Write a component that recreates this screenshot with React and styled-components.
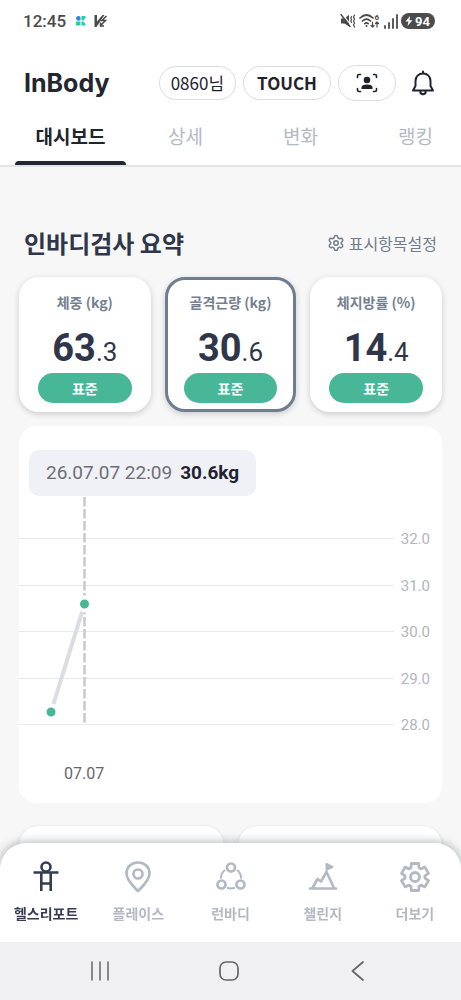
import React from "react";
import styled, { createGlobalStyle } from "styled-components";
import { Settings } from "lucide-react";

const GlobalStyle = createGlobalStyle`
  *, *::before, *::after { box-sizing: border-box; }
  body {
    margin: 0;
    background: #f7f7f7;
    font-family: Roboto, "Noto Sans CJK KR", sans-serif;
    color: #1f2430;
  }
  button { font: inherit; color: inherit; background: none; border: 0; padding: 0; cursor: pointer; }
  h1, h2, p { margin: 0; }
  svg { display: block; flex: none; }
`;

const korean = `"Noto Sans CJK KR", "Noto Sans", sans-serif`;

const Shell = styled.div`
  display: flex;
  flex-direction: column;
  height: 100vh;
  overflow: hidden;
`;

const StatusBar = styled.div`
  display: flex;
  align-items: center;
  justify-content: space-between;
  flex: none;
  height: 42px;
  padding: 0 26px 0 23px;
  background: #fff;
  color: #4a4a4a;
`;

const StatusGroup = styled.div`
  display: flex;
  align-items: center;
  gap: ${(p) => p.$gap}px;
`;

const Clock = styled.span`
  font-size: 17px;
  font-weight: 500;
  line-height: 20px;
  margin-right: 2px;
`;

const Battery = styled.span`
  display: flex;
  align-items: center;
  gap: 2px;
  height: 16px;
  padding: 0 5px 0 4px;
  border-radius: 8px;
  background: #4c4c4c;
  color: #fff;
  font-size: 13px;
  font-weight: 700;
`;

const Header = styled.header`
  display: flex;
  align-items: center;
  justify-content: space-between;
  flex: none;
  height: 80px;
  padding: 2px 26px 0 24px;
  background: #fff;
`;

const Logo = styled.h1`
  font-family: Inter, sans-serif;
  font-size: 25px;
  font-weight: 700;
  line-height: 32px;
  color: #23262f;
`;

const Actions = styled.div`
  display: flex;
  align-items: center;
  gap: 7px;
`;

const Pill = styled.button`
  display: flex;
  align-items: center;
  justify-content: center;
  height: ${(p) => (p.$icon ? 36 : 34)}px;
  padding: 0 ${(p) => p.$pad}px;
  border: 1px solid #dcdde2;
  border-radius: 18px;
  background: #fff;
  font-family: ${korean};
  font-size: 17px;
  font-weight: ${(p) => (p.$bold ? 700 : 400)};
  line-height: 24px;
  color: #1f222a;
`;

const BellButton = styled.button`
  margin-left: 8px;
`;

const Tabs = styled.nav`
  display: flex;
  flex: none;
  height: 45px;
  padding-left: 13px;
  background: #fff;
  border-bottom: 2px solid #e4e4e5;
`;

const Tab = styled.button`
  flex: 0 0 calc(25% + 3px);
  display: flex;
  flex-direction: column;
  align-items: center;
  justify-content: space-between;
  font-family: ${korean};
  font-size: 19px;
  line-height: 28px;
  font-weight: ${(p) => (p.$active ? 700 : 400)};
  color: ${(p) => (p.$active ? "#20242e" : "#b3bac3")};
  &::after {
    content: "";
    width: 111px;
    height: 4px;
    border-radius: 4px 4px 0 0;
    background: ${(p) => (p.$active ? "#202833" : "transparent")};
  }
`;

const Content = styled.main`
  flex: 1;
  min-height: 0;
  padding: 58px 19px 40px;
  overflow-y: auto;
  scrollbar-width: none;
  background: #f7f7f7;
`;

const SectionHead = styled.div`
  display: flex;
  align-items: center;
  justify-content: space-between;
  padding: 0 5px;
  margin-bottom: 16px;
`;

const SectionTitle = styled.h2`
  font-family: ${korean};
  font-size: 24px;
  font-weight: 700;
  line-height: 36px;
  color: #2f364a;
`;

const SettingsButton = styled.button`
  display: flex;
  align-items: center;
  gap: 4px;
  font-family: ${korean};
  font-size: 16px;
  line-height: 24px;
  color: #717d8c;
`;

const CardGrid = styled.div`
  display: grid;
  grid-template-columns: repeat(${(p) => p.$columns}, 1fr);
  gap: 14px;
`;

const MetricCard = styled.button`
  display: flex;
  flex-direction: column;
  align-items: stretch;
  height: 135px;
  padding: 12px 16px 6px;
  border: 3px solid ${(p) => (p.$selected ? "#6f7d91" : "#fff")};
  border-radius: 20px;
  background: #fff;
  box-shadow: 0 2px 6px rgba(0, 0, 0, 0.18);
  text-align: center;
`;

const MetricLabel = styled.span`
  font-family: ${korean};
  font-size: 14px;
  font-weight: 700;
  line-height: 20px;
  color: #748090;
  white-space: nowrap;
  margin: 0 -12px;
`;

const MetricValue = styled.span`
  margin-top: 16px;
  font-size: 26px;
  line-height: 40px;
  color: #2f364a;
  strong { font-size: 38px; font-weight: 700; }
`;

const Badge = styled.span`
  margin-top: 1px;
  border-radius: 15px;
  background: #48b797;
  color: #fff;
  font-family: ${korean};
  font-size: 14px;
  font-weight: 700;
  line-height: 30px;
`;

const ChartCard = styled.section`
  margin: 14px 0 23px;
  padding: 24px 0 17px;
  border-radius: 18px;
  background: #fff;
`;

const Reading = styled.p`
  width: fit-content;
  margin-left: 10px;
  padding: 0 17px;
  border-radius: 10px;
  background: #f0f1f6;
  font-size: 19px;
  line-height: 46px;
  color: #6e6f74;
  white-space: nowrap;
  strong { margin-left: 8px; font-weight: 700; color: #1f2430; }
`;

const Plot = styled.div`
  display: flex;
  gap: 7px;
  padding-right: 12px;
  svg { flex: 1; min-width: 0; height: 239px; }
`;

const Scale = styled.div`
  display: flex;
  flex-direction: column;
  justify-content: space-between;
  padding-top: 33px;
  font-size: 15px;
  line-height: 20px;
  color: #b0b5be;
`;

const DateLabel = styled.p`
  padding-left: 45px;
  margin-top: 27px;
  font-size: 16px;
  line-height: 24px;
  color: #66676b;
`;

const EmptyCard = styled.div`
  height: 135px;
  border-radius: 20px;
  background: #fff;
  box-shadow: 0 1px 4px rgba(0, 0, 0, 0.12);
`;

const BottomNav = styled.nav`
  display: flex;
  flex: none;
  height: 99px;
  margin-top: -28px;
  z-index: 1;
  border-radius: 26px 26px 0 0;
  background: #fff;
  box-shadow: 0 -1px 10px rgba(30, 50, 50, 0.35);
`;

const NavItem = styled.button`
  flex: 1;
  display: flex;
  flex-direction: column;
  align-items: center;
  gap: 9px;
  padding-top: 17px;
  font-family: ${korean};
  font-size: 14px;
  font-weight: 700;
  line-height: 20px;
  color: ${(p) => (p.$active ? "#343d54" : "#b2b9c2")};
`;

const SystemBar = styled.div`
  display: flex;
  flex: none;
  height: 58px;
  padding: 0 38px 0 35px;
  z-index: 1;
  background: #f0f0f2;
`;

const SystemButton = styled.button`
  flex: 1;
  display: flex;
  align-items: center;
  justify-content: center;
`;

const iconProps = {
  fill: "none",
  stroke: "currentColor",
  strokeLinecap: "round",
  strokeLinejoin: "round",
  "aria-hidden": true,
};

const AppBadgeIcon = () => (
  <svg width="10" height="10" viewBox="0 0 10 10" aria-hidden="true">
    <circle cx="2.4" cy="2.4" r="2.3" fill="#2f80e8" />
    <path d="M5.5 0H9.5V1.5L7.5 4.5H5.5ZM0 5.5H4.5V9.5H0ZM5.5 5.5H7.5L9.5 8V9.5H5.5Z" fill="#25cfa4" />
  </svg>
);

const SlashIcon = () => (
  <svg width="14" height="14" viewBox="0 0 14 14" aria-hidden="true">
    <path d="M0.500 1H3V7.500L8.500 1H10.500L2.500 13H0.500Z" fill="currentColor" />
    <path d="M12.500 2L8 6.500H11.500L6.500 11.500M6.500 8.500V12H10" fill="none" stroke="currentColor" strokeWidth="1.500" />
  </svg>
);

const MutedIcon = () => (
  <svg width="16" height="16" viewBox="0 0 16 16" {...iconProps} strokeWidth="1.4">
    <path d="M1 5.500H4.500L9 1.800V13.500L4.500 10.500H1Z" fill="currentColor" stroke="none" />
    <path d="M2.300 0.800L11.500 13" stroke="#fff" strokeWidth="1.200" />
    <path d="M1 1.500L10 13.500" />
    <path d="M11.500 3.500L10.800 5L11.500 6.500L10.800 8L11.500 9.500M14.500 2L13.500 4L14.500 6L13.500 8L14.500 10L13.500 12L14.500 14" strokeWidth="1.200" />
  </svg>
);

const WifiIcon = () => (
  <svg width="22" height="16" viewBox="0 0 22 16" {...iconProps} strokeWidth="1.7">
    <path d="M1 5Q7.500 -1 14 5M3.500 8Q7.500 4 11.500 8M5.800 10.600Q7.500 9 9.200 10.600" />
    <circle cx="7.500" cy="13" r="1" fill="currentColor" stroke="none" />
    <path d="M13.500 9V14M12 12.500L13.500 14L15 12.500M18 14V9M16.500 10.500L18 9L19.500 10.500" strokeWidth="1.200" />
    <text x="15.500" y="6.500" fontSize="8" fontWeight="700" fill="currentColor" stroke="none">6</text>
  </svg>
);

const SignalIcon = () => (
  <svg width="14" height="15" viewBox="0 0 14 15" {...iconProps} strokeWidth="1.800">
    <path d="M1 12V14M5 9V14M9 5V14M13 1V14" />
  </svg>
);

const BoltIcon = () => (
  <svg width="8" height="10" viewBox="0 0 8 10" aria-hidden="true">
    <path d="M5 0L0.500 5.500H3.500L2.500 10L7.500 4.200H4.500Z" fill="#fff" />
  </svg>
);

const ScanPersonIcon = () => (
  <svg width="22" height="20" viewBox="0 0 22 20" {...iconProps} strokeWidth="1.600">
    <path d="M1.500 4.500V3Q1.500 1.500 3 1.500H4.500M17.500 1.500H19Q20.500 1.500 20.500 3V4.500M20.500 15.500V17Q20.500 18.500 19 18.500H17.500M4.500 18.500H3Q1.500 18.500 1.500 17V15.500" />
    <circle cx="11" cy="7" r="3.300" fill="currentColor" stroke="none" />
    <path d="M5.500 16V14.500Q5.500 11.500 11 11.500Q16.500 11.500 16.500 14.500V16Z" fill="currentColor" stroke="none" />
  </svg>
);

const BellIcon = () => (
  <svg width="24" height="26" viewBox="0 0 24 26" {...iconProps} strokeWidth="2">
    <path d="M12 3.500C7.500 3.500 4.500 6.800 4.500 11V16L2 20.500H22L19.500 16V11C19.500 6.800 16.500 3.500 12 3.500Z" />
    <path d="M12 1.500V3M9.300 21.500C9.300 25.200 14.700 25.200 14.700 21.500" />
  </svg>
);

const BodyIcon = () => (
  <svg width="34" height="34" viewBox="0 0 34 34" {...iconProps} strokeWidth="2.600">
    <circle cx="17" cy="7" r="4.500" />
    <path d="M4.500 12.500H29.500M12.300 12.500V31M21.700 12.500V31M12.300 23.500H21.700" strokeLinecap="butt" />
  </svg>
);

const PinIcon = () => (
  <svg width="34" height="34" viewBox="0 0 34 34" {...iconProps} strokeWidth="2.700">
    <path d="M17 31C13 27 5.500 20.500 5.500 13.500C5.500 7 10.500 2.500 17 2.500S28.500 7 28.500 13.500C28.500 20.500 21 27 17 31Z" />
    <circle cx="17" cy="14" r="4.500" />
  </svg>
);

const CirclesIcon = () => (
  <svg width="34" height="34" viewBox="0 0 34 34" {...iconProps} strokeWidth="2.700">
    <circle cx="17" cy="7.500" r="4" />
    <circle cx="7.500" cy="24.500" r="4" />
    <circle cx="26.500" cy="24.500" r="4" />
    <path d="M11 10Q7 13 6.800 18.500M23 10Q27 13 27.200 18.500M13 27.800Q17 29 21 27.800" strokeWidth="2" strokeLinecap="butt" />
  </svg>
);

const SummitIcon = () => (
  <svg width="34" height="34" viewBox="0 0 34 34" {...iconProps} strokeWidth="2.600">
    <path d="M4 28.500H30M6.500 28L11.500 19L15 21.500L20.500 12L28 28" />
    <path d="M20.500 12V4L26.500 7L20.500 9.500" fill="currentColor" strokeWidth="2" />
  </svg>
);

const gearOutline = Array.from({ length: 6 }, (_, tooth) =>
  [[-24, 10], [-15, 14], [15, 14], [24, 10]].map(([offset, radius]) => {
    const angle = ((tooth * 60 + offset - 90) * Math.PI) / 180;
    return `${(17 + radius * Math.cos(angle)).toFixed(2)},${(17 + radius * Math.sin(angle)).toFixed(2)}`;
  }).join(" ")
).join(" ");

const GearIcon = () => (
  <svg width="34" height="34" viewBox="0 0 34 34" {...iconProps} strokeWidth="2.800">
    <polygon points={gearOutline} />
    <circle cx="17" cy="17" r="4.500" />
  </svg>
);

const metrics = [
  { label: "체중 (kg)", whole: "63", decimal: ".3" },
  { label: "골격근량 (kg)", whole: "30", decimal: ".6", selected: true },
  { label: "체지방률 (%)", whole: "14", decimal: ".4" },
];

const navItems = [
  { label: "헬스리포트", Icon: BodyIcon },
  { label: "플레이스", Icon: PinIcon },
  { label: "런바디", Icon: CirclesIcon },
  { label: "챌린지", Icon: SummitIcon },
  { label: "더보기", Icon: GearIcon },
];

const scale = ["32.0", "31.0", "30.0", "29.0", "28.0"];

const Chart = () => (
  <svg role="img" aria-label="골격근량">
    {scale.map((value, i) => (
      <rect key={value} x="0" y={42 + Math.round(i * 46.5)} width="100%" height="1" fill="#e8e9ea" />
    ))}
    <line x1="65.500" y1="1" x2="65.500" y2="227" stroke="#c9c9cc" strokeWidth="2.500" strokeDasharray="9.500 2.500" />
    <line x1="32" y1="216" x2="65.500" y2="108" stroke="#dcdde2" strokeWidth="4" />
    <circle cx="32" cy="216" r="6.500" fill="#48b797" stroke="#fff" strokeWidth="4" />
    <circle cx="65.500" cy="108" r="6.500" fill="#48b797" stroke="#fff" strokeWidth="4" />
  </svg>
);

export default function App() {
  return (
    <Shell>
      <GlobalStyle />
      <StatusBar>
        <StatusGroup $gap={8}>
          <Clock>12:45</Clock>
          <AppBadgeIcon />
          <SlashIcon />
        </StatusGroup>
        <StatusGroup $gap={3}>
          <MutedIcon />
          <WifiIcon />
          <SignalIcon />
          <Battery><BoltIcon />94</Battery>
        </StatusGroup>
      </StatusBar>

      <Header>
        <Logo>InBody</Logo>
        <Actions>
          <Pill $pad={11}>0860님</Pill>
          <Pill $pad={13} $bold>TOUCH</Pill>
          <Pill $pad={17} $icon aria-label="QR"><ScanPersonIcon /></Pill>
          <BellButton aria-label="알림"><BellIcon /></BellButton>
        </Actions>
      </Header>

      <Tabs>
        {["대시보드", "상세", "변화", "랭킹"].map((name, i) => (
          <Tab key={name} $active={i === 0}>{name}</Tab>
        ))}
      </Tabs>

      <Content>
        <SectionHead>
          <SectionTitle>인바디검사 요약</SectionTitle>
          <SettingsButton>
            <Settings size={18} strokeWidth={2} aria-hidden="true" />
            표시항목설정
          </SettingsButton>
        </SectionHead>

        <CardGrid $columns={3}>
          {metrics.map((m) => (
            <MetricCard key={m.label} $selected={m.selected}>
              <MetricLabel>{m.label}</MetricLabel>
              <MetricValue><strong>{m.whole}</strong>{m.decimal}</MetricValue>
              <Badge>표준</Badge>
            </MetricCard>
          ))}
        </CardGrid>

        <ChartCard>
          <Reading>26.07.07 22:09<strong>30.6kg</strong></Reading>
          <Plot>
            <Chart />
            <Scale>
              {scale.map((value) => <span key={value}>{value}</span>)}
            </Scale>
          </Plot>
          <DateLabel>07.07</DateLabel>
        </ChartCard>

        <CardGrid $columns={2}>
          <EmptyCard />
          <EmptyCard />
        </CardGrid>
      </Content>

      <BottomNav>
        {navItems.map(({ label, Icon }, i) => (
          <NavItem key={label} $active={i === 0}>
            <Icon />
            {label}
          </NavItem>
        ))}
      </BottomNav>

      <SystemBar>
        <SystemButton aria-label="최근 앱">
          <svg width="20" height="20" viewBox="0 0 20 20" {...iconProps} strokeWidth="1.500" color="#66666a">
            <path d="M2 1V19M10 1V19M18 1V19" />
          </svg>
        </SystemButton>
        <SystemButton aria-label="홈">
          <svg width="20" height="20" viewBox="0 0 20 20" {...iconProps} strokeWidth="1.700" color="#66666a">
            <rect x="1" y="1" width="18" height="18" rx="6" />
          </svg>
        </SystemButton>
        <SystemButton aria-label="뒤로">
          <svg width="20" height="20" viewBox="0 0 20 20" {...iconProps} strokeWidth="1.700" color="#66666a">
            <path d="M15 1L4.500 10L15 19" />
          </svg>
        </SystemButton>
      </SystemBar>
    </Shell>
  );
}
